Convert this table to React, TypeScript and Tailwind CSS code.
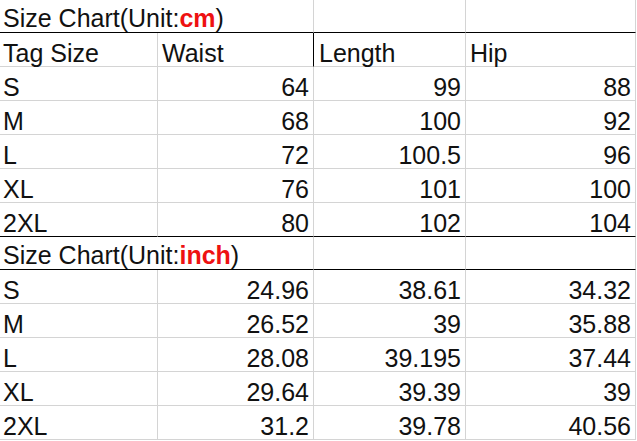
const cmRows = [
  ["S", "64", "99", "88"],
  ["M", "68", "100", "92"],
  ["L", "72", "100.5", "96"],
  ["XL", "76", "101", "100"],
  ["2XL", "80", "102", "104"],
];

const inchRows = [
  ["S", "24.96", "38.61", "34.32"],
  ["M", "26.52", "39", "35.88"],
  ["L", "28.08", "39.195", "37.44"],
  ["XL", "29.64", "39.39", "39"],
  ["2XL", "31.2", "39.78", "40.56"],
];

function Title({ unit }: { unit: string }) {
  return (
    <>
      <div className="col-span-2 flex h-[33px] items-end whitespace-nowrap border-b border-r border-[#d4d4d4] border-b-black pb-[1px] pl-[3px]">
        Size Chart(Unit:<span className="font-bold text-[#ee1111]">{unit}</span>)
      </div>
      <div className="h-[33px] border-b border-r border-[#d4d4d4] border-b-black" />
      <div className="h-[33px] border-b border-r border-[#d4d4d4] border-b-black" />
    </>
  );
}

function DataRow({ row, lastBlack }: { row: string[]; lastBlack?: boolean }) {
  const b = lastBlack ? "border-b-black" : "";
  return (
    <>
      <div className={`flex h-[34px] items-end border-b border-r border-[#d4d4d4] ${b} pl-[3px]`}>
        {row[0]}
      </div>
      {row.slice(1).map((v, i) => (
        <div
          key={i}
          className={`flex h-[34px] items-end justify-end border-b border-r border-[#d4d4d4] ${b} pr-[4px]`}
        >
          {v}
        </div>
      ))}
    </>
  );
}

export default function App() {
  return (
    <div className="h-[441px] w-[637px] overflow-hidden bg-white font-['Liberation_Sans',Arial,sans-serif] text-[25px] leading-[25px] text-[#111]">
      <div className="grid grid-cols-[158px_156px_152px_170px]">
        <Title unit="cm" />
        <div className="flex h-[34px] items-end border-b border-r border-[#d4d4d4] pl-[3px]">Tag Size</div>
        <div className="flex h-[34px] items-end border-b border-r border-[#d4d4d4] border-r-black pl-[4px]">Waist</div>
        <div className="flex h-[34px] items-end border-b border-r border-[#d4d4d4] pl-[5px]">Length</div>
        <div className="flex h-[34px] items-end border-b border-r border-[#d4d4d4] pl-[4px]">Hip</div>
        {cmRows.map((r, i) => (
          <DataRow key={r[0]} row={r} lastBlack={i === cmRows.length - 1} />
        ))}
        <Title unit="inch" />
        {inchRows.map((r) => (
          <DataRow key={r[0] + "in"} row={r} />
        ))}
      </div>
    </div>
  );
}
